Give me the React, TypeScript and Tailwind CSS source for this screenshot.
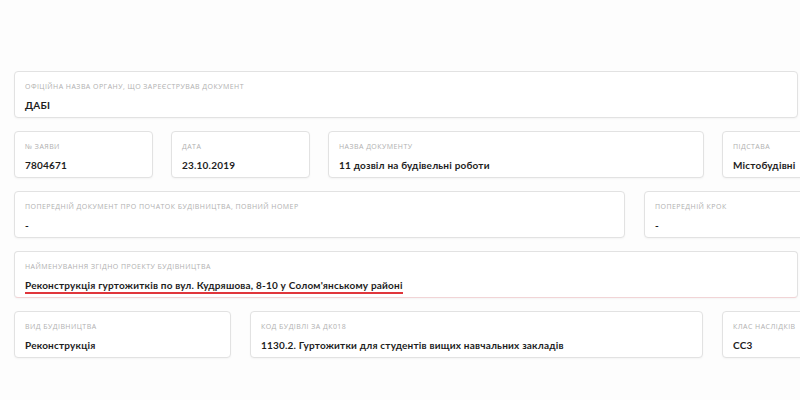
import React from 'react';

interface FieldProps {
  label: string;
  value: string;
  width: string;
  underline?: boolean;
}

const Field: React.FC<FieldProps> = ({ label, value, width, underline }) => (
  <div
    className={`${width} h-[47px] shrink-0 bg-white border border-[#e2e2e2] rounded-[4px] shadow-[0_1px_2px_rgba(0,0,0,0.04)] pl-[10px] pt-[10px] ${underline ? 'border-b-[#f1d4d6]' : ''}`}
  >
    <div className="text-[7px] leading-[10px] uppercase tracking-[0.45px] text-[#b0b0b0] whitespace-nowrap">{label}</div>
    <div
      className="mt-[7px] text-[10px] leading-[13px] font-bold text-[#1d1d1d] whitespace-nowrap tracking-[0.2px]"
      style={{ fontFamily: 'Lato, "Open Sans", sans-serif' }}
    >
      <span className={underline ? 'border-b-2 border-[#e0353b] pb-[1px]' : ''}>{value}</span>
    </div>
  </div>
);

const App: React.FC = () => {
  return (
    <div
      className="w-[800px] h-[400px] overflow-hidden bg-[#fdfdfd]"
      style={{ fontFamily: '"Open Sans", "DejaVu Sans", sans-serif' }}
    >
      <div className="w-[1000px] pl-[14px] pt-[71px] flex flex-col gap-[13px]">
        <div className="flex">
          <Field width="w-[784px]" label="Офіційна назва органу, що зареєстрував документ" value="ДАБІ" />
        </div>
        <div className="flex gap-[18px]">
          <Field width="w-[139px]" label="№ заяви" value="7804671" />
          <Field width="w-[139px]" label="Дата" value="23.10.2019" />
          <Field width="w-[376px]" label="Назва документу" value="11 дозвіл на будівельні роботи" />
          <Field width="w-[200px]" label="Підстава" value="Містобудівні" />
        </div>
        <div className="flex gap-[19px]">
          <Field width="w-[611px]" label="Попередній документ про початок будівництва, повний номер" value="-" />
          <Field width="w-[200px]" label="Попередній крок" value="-" />
        </div>
        <div className="flex">
          <Field
            width="w-[784px]"
            label="Найменування згідно проекту будівництва"
            value="Реконструкція гуртожитків по вул. Кудряшова, 8-10 у Солом'янському районі"
            underline
          />
        </div>
        <div className="flex gap-[19px]">
          <Field width="w-[217px]" label="Вид будівництва" value="Реконструкція" />
          <Field width="w-[453px]" label="Код будівлі за ДК018" value="1130.2. Гуртожитки для студентів вищих навчальних закладів" />
          <Field width="w-[200px]" label="Клас наслідків" value="СС3" />
        </div>
      </div>
    </div>
  );
};

export default App;
